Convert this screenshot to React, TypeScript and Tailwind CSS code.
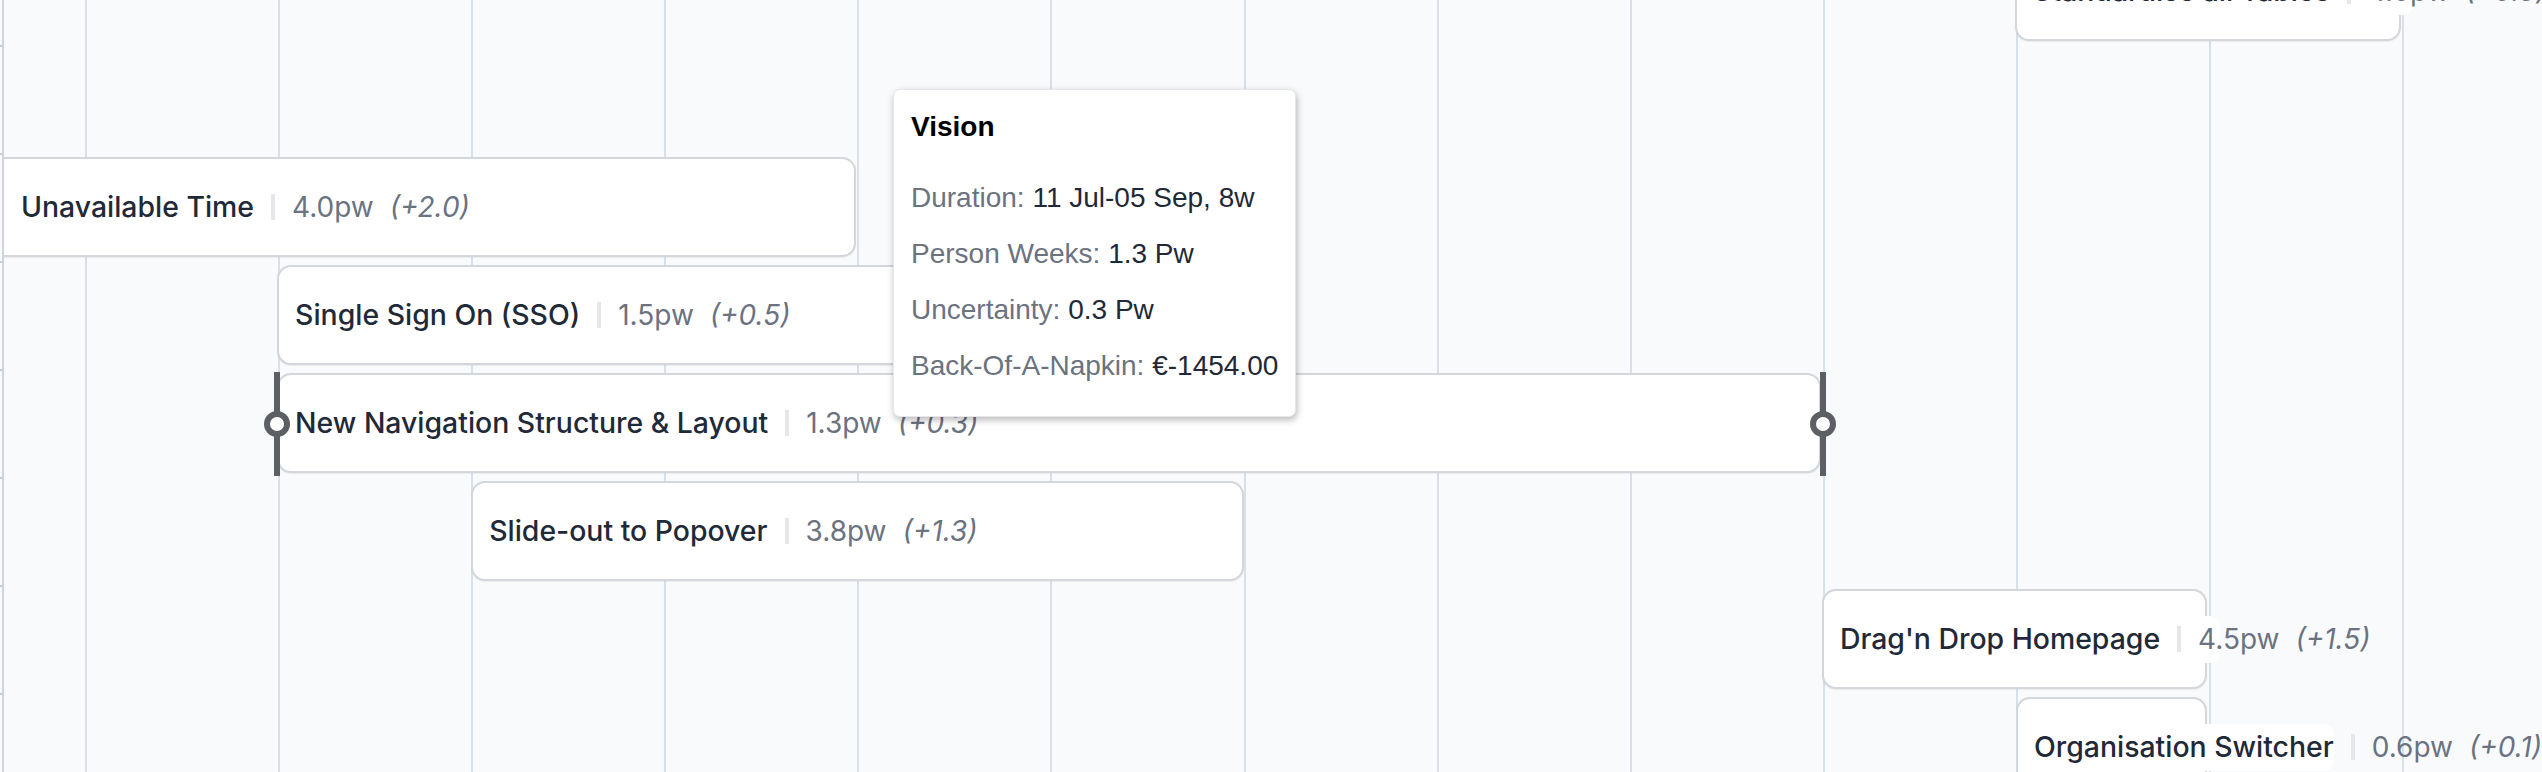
import React from "react";

const G0 = 86;
const GW = 193.1;
const gx = (k: number) => G0 + GW * k;

type Bar = {
  title: string;
  pw: string;
  unc: string;
  left: number;
  right: number;
  clipLeft?: boolean;
  selected?: boolean;
  labelBg?: number;
};

// one entry per timeline row (null = empty row)
const rows: (Bar | null)[] = [
  { title: "Standardise all Tables", pw: "4.0pw", unc: "(+0.5)", left: gx(10) - 2, right: gx(12) - 2, labelBg: 2411 },
  null,
  { title: "Unavailable Time", pw: "4.0pw", unc: "(+2.0)", left: 3, right: gx(4) - 2, clipLeft: true },
  { title: "Single Sign On (SSO)", pw: "1.5pw", unc: "(+0.5)", left: gx(1) - 2, right: gx(6) - 2 },
  { title: "New Navigation Structure & Layout", pw: "1.3pw", unc: "(+0.3)", left: gx(1) - 2, right: gx(9) - 3, selected: true },
  { title: "Slide-out to Popover", pw: "3.8pw", unc: "(+1.3)", left: gx(2) - 1, right: gx(6) - 1 },
  { title: "Drag'n Drop Homepage", pw: "4.5pw", unc: "(+1.5)", left: gx(9) - 2, right: gx(11) - 3, labelBg: 2218 },
  { title: "Organisation Switcher", pw: "0.6pw", unc: "(+0.1)", left: gx(10) - 1, right: gx(11) - 3, labelBg: 2332 },
];

function Handle({ side }: { side: "left" | "right" }) {
  return (
    <div
      className={
        "absolute top-[-1px] bottom-[-3px] w-[6px] flex items-center justify-center z-20 " +
        (side === "left" ? "left-[-3px]" : "right-[-5px]")
      }
    >
      <div className="absolute inset-0 bg-[#5c5f63]" />
      <div className="relative w-[26px] h-[26px] rounded-full border-[6px] border-[#5c5f63] bg-white shrink-0" />
    </div>
  );
}

function BarItem({ bar }: { bar: Bar }) {
  return (
    <div
      className="relative h-full shrink-0"
      style={{ marginLeft: bar.left, width: bar.right - bar.left }}
    >
      <div
        className={
          "relative h-full bg-white border-2 border-[#d3d6da] shadow-[0_1px_1px_rgba(0,0,0,0.06)] " +
          (bar.clipLeft ? "border-l-0 rounded-r-[14px]" : "rounded-[14px]")
        }
      >
        {bar.labelBg !== undefined && (
          <div
            className="absolute top-[25px] h-[47px] left-0 bg-white rounded-[10px]"
            style={{ width: bar.labelBg - bar.left }}
          />
        )}
        <div
          className={
            "relative flex items-center h-full whitespace-nowrap font-['Inter',sans-serif] text-[28px] " +
            (bar.clipLeft ? "pl-[18px]" : "pl-[16px]")
          }
        >
          <span className="font-medium text-[28.4px] text-[#1f2937]">{bar.title}</span>
          <span className="w-[4px] h-[26px] bg-[#e5e7eb] mx-[17px] shrink-0" />
          <span className="text-[#6b7280]">{bar.pw}</span>
          <span className="text-[#6b7280] italic ml-[16px]">{bar.unc}</span>
        </div>
      </div>
      {bar.selected && (
        <>
          <Handle side="left" />
          <Handle side="right" />
        </>
      )}
    </div>
  );
}

function Tooltip() {
  const items: [string, string][] = [
    ["Duration:", "11 Jul-05 Sep, 8w"],
    ["Person Weeks:", "1.3 Pw"],
    ["Uncertainty:", "0.3 Pw"],
    ["Back-Of-A-Napkin:", "€-1454.00"],
  ];
  return (
    <div className="absolute left-[893px] top-[89px] z-30 bg-white rounded-[7px] border border-[#e5e7eb] shadow-[1px_3px_7px_rgba(0,0,0,0.28)] px-[17px] pt-[9px] pb-[22px] font-['Liberation_Sans',Arial,sans-serif] text-[28px] leading-[56px] whitespace-nowrap">
      <div className="font-bold text-black">Vision</div>
      <div className="mt-[15px] flex flex-col">
        {items.map(([k, v]) => (
          <div key={k}>
            <span className="text-[#6b7280]">{k}</span>{" "}
            <span className="text-[#1f2937]">{v}</span>
          </div>
        ))}
      </div>
    </div>
  );
}

export default function App() {
  return (
    <div className="relative w-[2542px] h-[772px] overflow-hidden bg-[#f8fafc] grid">
      {/* week grid columns */}
      <div className="col-start-1 row-start-1 flex pl-[85px]">
        {Array.from({ length: 13 }, (_, k) => (
          <div key={k} className="w-[193.1px] shrink-0 border-l-2 border-[#d8e0ea]" />
        ))}
      </div>

      {/* timeline rows */}
      <div className="col-start-1 row-start-1 flex flex-col gap-[8px] mt-[-59px]">
        {rows.map((bar, i) => (
          <div key={i} className="h-[100px] flex shrink-0">
            {bar && <BarItem bar={bar} />}
          </div>
        ))}
      </div>

      {/* left edge with row ticks */}
      <div className="col-start-1 row-start-1 z-10 flex pointer-events-none">
        <div className="flex flex-col gap-[106px] pt-[45px] w-[3px]">
          {Array.from({ length: 7 }, (_, k) => (
            <div key={k} className="h-[2px] w-[3px] bg-[#c5cdd8] shrink-0" />
          ))}
        </div>
        <div className="w-[2px] h-full bg-[#cdd4de] -ml-[1px]" />
      </div>

      <Tooltip />
    </div>
  );
}
